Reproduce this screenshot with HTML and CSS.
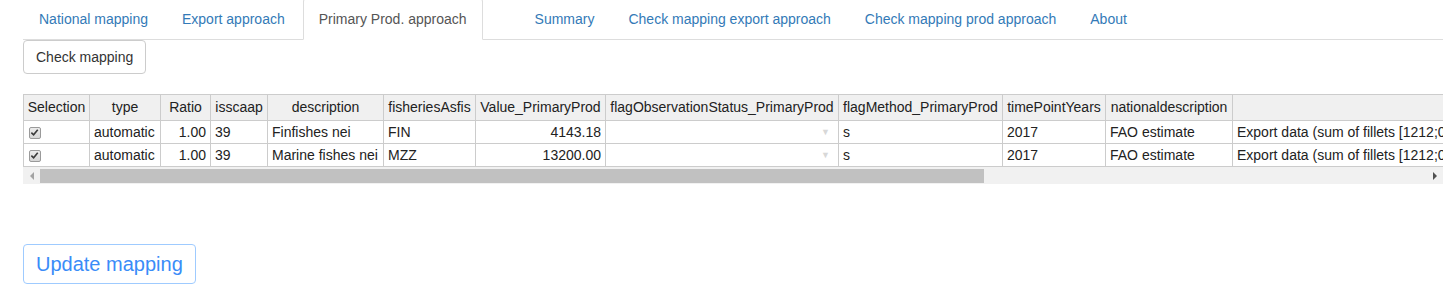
FILE: index.html
```html
<!DOCTYPE html>
<html>
<head>
<meta charset="utf-8">
<link rel="stylesheet" href="styles.css">
</head>
<body>
<div class="page">
  <ul class="tabs">
    <li><a>National mapping</a></li>
    <li><a>Export approach</a></li>
    <li class="active"><a>Primary Prod. approach</a></li>
    <li class="gap"><a></a></li>
    <li><a>Summary</a></li>
    <li><a>Check mapping export approach</a></li>
    <li><a>Check mapping prod approach</a></li>
    <li><a>About</a></li>
  </ul>

  <button class="btn">Check mapping</button>

  <div class="grid">
    <div class="row head">
      <div class="c c1">Selection</div>
      <div class="c c2">type</div>
      <div class="c c3">Ratio</div>
      <div class="c c4">isscaap</div>
      <div class="c c5">description</div>
      <div class="c c6">fisheriesAsfis</div>
      <div class="c c7">Value_PrimaryProd</div>
      <div class="c c8">flagObservationStatus_PrimaryProd</div>
      <div class="c c9">flagMethod_PrimaryProd</div>
      <div class="c c10">timePointYears</div>
      <div class="c c11">nationaldescription</div>
      <div class="c c12"></div>
    </div>
    <div class="row">
      <div class="c c1"><span class="chk"><svg viewBox="0 0 10 10" width="9" height="9"><path d="M1.5 5.2 L4 7.6 L8.6 2" fill="none" stroke="#3a3a3a" stroke-width="1.8"/></svg></span></div>
      <div class="c c2">automatic</div>
      <div class="c c3 num">1.00</div>
      <div class="c c4">39</div>
      <div class="c c5">Finfishes nei</div>
      <div class="c c6">FIN</div>
      <div class="c c7 num">4143.18</div>
      <div class="c c8"><span class="arrow">▼</span></div>
      <div class="c c9">s</div>
      <div class="c c10">2017</div>
      <div class="c c11">FAO estimate</div>
      <div class="c c12">Export data (sum of fillets [1212;0304] and whole fish)</div>
    </div>
    <div class="row">
      <div class="c c1"><span class="chk"><svg viewBox="0 0 10 10" width="9" height="9"><path d="M1.5 5.2 L4 7.6 L8.6 2" fill="none" stroke="#3a3a3a" stroke-width="1.8"/></svg></span></div>
      <div class="c c2">automatic</div>
      <div class="c c3 num">1.00</div>
      <div class="c c4">39</div>
      <div class="c c5">Marine fishes nei</div>
      <div class="c c6">MZZ</div>
      <div class="c c7 num">13200.00</div>
      <div class="c c8"><span class="arrow">▼</span></div>
      <div class="c c9">s</div>
      <div class="c c10">2017</div>
      <div class="c c11">FAO estimate</div>
      <div class="c c12">Export data (sum of fillets [1212;0304] and whole fish)</div>
    </div>
    <div class="scrollbar">
      <div class="sb-btn"><span class="tri-left"></span></div>
      <div class="thumb"></div>
      <div class="sb-fill"></div>
      <div class="sb-btn"><span class="tri-right"></span></div>
    </div>
  </div>

  <button class="btn-lg">Update mapping</button>
</div>
</body>
</html>
```

FILE: styles.css
```css
html, body {
  margin: 0;
  padding: 0;
  background: #fff;
}

body {
  font-family: "Liberation Sans", Arial, sans-serif;
  font-size: 14px;
  line-height: 20px;
  color: #333;
}

.page {
  padding: 0 10px 0 23px;
}

.tabs {
  list-style: none;
  margin: -2px 0 0 0;
  padding: 0;
  display: flex;
  border-bottom: 1px solid #ddd;
}

.tabs li {
  margin: 0 2px -1px 0;
}

.tabs a {
  display: block;
  padding: 10px 15px;
  border: 1px solid transparent;
  border-radius: 4px 4px 0 0;
  color: #337ab7;
  white-space: nowrap;
  height: 20px;
}

.tabs .active a {
  color: #555;
  background: #fff;
  border-color: #ddd #ddd transparent #ddd;
}

.tabs .gap a {
  width: 0;
  padding: 10px 15px;
}

.btn {
  display: block;
  font-family: inherit;
  font-size: 14px;
  line-height: 20px;
  color: #333;
  background: #fff;
  border: 1px solid #ccc;
  border-radius: 4px;
  padding: 6px 12px;
  margin: 0;
}

.grid {
  margin-top: 20px;
  width: 1420px;
  overflow: hidden;
  background: #fff;
}

.row {
  display: flex;
  white-space: nowrap;
}

.row.head {
  border-top: 1px solid #ccc;
}

.c {
  flex: none;
  box-sizing: border-box;
  height: 23px;
  line-height: 22px;
  padding: 0 4px;
  border-right: 1px solid #ccc;
  border-bottom: 1px solid #ccc;
  overflow: hidden;
  color: #222;
}

.head .c {
  height: 26px;
  line-height: 25px;
  background: #f0f0f0;
  text-align: center;
  padding: 0 2px;
}

.c1 { width: 67px; border-left: 1px solid #ccc; }
.c2 { width: 71px; }
.c3 { width: 50px; }
.c4 { width: 57px; }
.c5 { width: 116px; }
.c6 { width: 92px; }
.c7 { width: 130px; }
.c8 { width: 233px; position: relative; }
.c9 { width: 164px; }
.c10 { width: 103px; }
.c11 { width: 127px; }
.c12 { width: 420px; }

.num {
  text-align: right;
}

.chk {
  display: inline-block;
  box-sizing: border-box;
  width: 12px;
  height: 12px;
  margin-top: 6px;
  margin-left: 1px;
  border: 1px solid #9a9a9a;
  border-radius: 2px;
  background: linear-gradient(#ececec, #d6d6d6);
  vertical-align: top;
  position: relative;
}

.chk svg {
  position: absolute;
  left: 0;
  top: 0;
}

.arrow {
  float: right;
  font-size: 9px;
  color: #d8d8d8;
  margin-right: 4px;
}

.scrollbar {
  display: flex;
  align-items: center;
  height: 17px;
  background: #f1f1f1;
}

.sb-btn {
  width: 17px;
  height: 17px;
  flex: none;
  display: flex;
  align-items: center;
  justify-content: center;
}

.tri-left {
  width: 0;
  height: 0;
  border-top: 4px solid transparent;
  border-bottom: 4px solid transparent;
  border-right: 4px solid #a3a3a3;
}

.tri-right {
  width: 0;
  height: 0;
  border-top: 4px solid transparent;
  border-bottom: 4px solid transparent;
  border-left: 4px solid #505050;
}

.thumb {
  flex: none;
  width: 944px;
  height: 14px;
  background: #c1c1c1;
}

.sb-fill {
  flex: 1;
}

.btn-lg {
  display: block;
  margin-top: 60px;
  font-family: inherit;
  font-size: 20px;
  line-height: 22px;
  color: #3a8cf8;
  background: #fff;
  border: 1px solid #9fcbff;
  border-radius: 4px;
  padding: 8px 12px;
}
```
